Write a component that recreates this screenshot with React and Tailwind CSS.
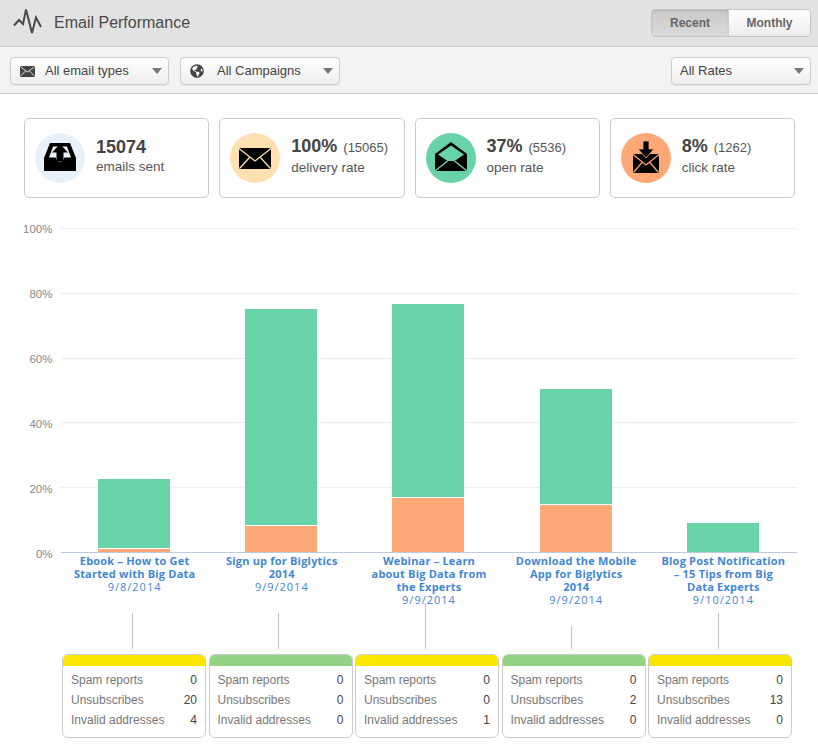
import React from 'react';
import { FaGlobeAmericas } from 'react-icons/fa';

const font = "font-['Liberation_Sans',Arial,sans-serif]";

// Icons
const PulseIcon = () => (
  <svg width="30" height="30" viewBox="0 0 30 30" fill="none" className="shrink-0">
    <polyline points="1,17.5 6,12 10,16 13,1.5 19,25 23,9.5 28,19" stroke="#4a4a4a" strokeWidth="2" />
  </svg>
);

const SmallMail = () => (
  <svg width="15" height="11" viewBox="0 0 15 11" className="shrink-0">
    <rect width="15" height="11" rx="1" fill="#444" />
    <path d="M0.5 0.8 L7.5 6 L14.5 0.8 M0.5 10.2 L5.5 5 M14.5 10.2 L9.5 5" stroke="#eee" strokeWidth="0.9" fill="none" />
  </svg>
);

const InboxIcon = () => (
  <svg width="50" height="50" viewBox="0 0 50 50">
    <path d="M15 10 H35 L41 25 V38 H9 V25 Z" fill="#000" />
    <path d="M18 13.5 L14 24.5 H20.5 L22.5 28.5 H27.5 L29.5 24.5 H36 L32 13.5 Z" fill="#e8f1fa" />
    <path d="M25 11 L33 19.5 H28.5 V28.5 H21.5 V19.5 H17 Z" fill="#000" />
  </svg>
);

const ClosedMailIcon = () => (
  <svg width="50" height="50" viewBox="0 0 50 50">
    <rect x="9" y="15" width="32" height="21" rx="1" fill="#000" />
    <path d="M9 15.5 L25 28 L41 15.5 M9.5 35.5 L20 24 M40.5 35.5 L30 24" stroke="#fee0b3" strokeWidth="1.3" fill="none" />
  </svg>
);

const OpenMailIcon = () => (
  <svg width="50" height="50" viewBox="0 0 50 50">
    <path d="M25 9 L41 21 V38 H9 V21 Z" fill="#000" />
    <path d="M25 12.5 L38 21.5 L28.5 28 H21.5 L12 21.5 Z" fill="#68d3a8" />
    <path d="M21.5 28 L9 38 M28.5 28 L41 38" stroke="#68d3a8" strokeWidth="1.4" fill="none" />
  </svg>
);

const DownloadMailIcon = () => (
  <svg width="50" height="50" viewBox="0 0 50 50">
    <rect x="12" y="21" width="26" height="19" rx="1" fill="#000" />
    <path d="M12 21.5 L25 32 L38 21.5 M12.5 39.5 L21 29.5 M37.5 39.5 L29 29.5" stroke="#fea878" strokeWidth="1.2" fill="none" />
    <path d="M22 8 H28 V16 H33 L25 25 L17 16 H22 Z" fill="#000" stroke="#fea878" strokeWidth="0.8" />
  </svg>
);

const Caret = () => (
  <svg width="10" height="6" viewBox="0 0 10 6" className="shrink-0">
    <path d="M0 0 H10 L5 6 Z" fill="#777" />
  </svg>
);

const Select = ({ width, pad, icon, iconWidth, label }) => (
  <div className={`${width} ${pad} h-[28px] flex items-center pr-[6px] bg-gradient-to-b from-white to-[#eeeeee] border border-[#cccccc] rounded-[4px] shadow-[0_1px_1px_rgba(0,0,0,0.05)]`}>
    {icon && <span className={`${iconWidth} flex items-center shrink-0`}>{icon}</span>}
    <span className="text-[13px] text-[#444] flex-1">{label}</span>
    <Caret />
  </div>
);

const stats = [
  { id: 1, icon: InboxIcon, circle: 'bg-[#e8f1fa]', value: '15074', count: '', label: 'emails sent' },
  { id: 2, icon: ClosedMailIcon, circle: 'bg-[#fee0b3]', value: '100%', count: '(15065)', label: 'delivery rate' },
  { id: 3, icon: OpenMailIcon, circle: 'bg-[#68d3a8]', value: '37%', count: '(5536)', label: 'open rate' },
  { id: 4, icon: DownloadMailIcon, circle: 'bg-[#fea878]', value: '8%', count: '(1262)', label: 'click rate' },
];

const axisLabels = ['100%', '80%', '60%', '40%', '20%', '0%'];

const campaigns = [
  {
    id: 1,
    bar: 'h-[73px]',
    orange: 'h-[3px]',
    lines: ['Ebook – How to Get', 'Started with Big Data'],
    date: '9/8/2014',
    connector: 'h-[36px]',
    status: 'bg-[#fae600]',
    rows: [0, 20, 4],
  },
  {
    id: 2,
    bar: 'h-[243px]',
    orange: 'h-[26px]',
    lines: ['Sign up for Biglytics', '2014'],
    date: '9/9/2014',
    connector: 'h-[36px]',
    status: 'bg-[#93d384]',
    rows: [0, 0, 0],
  },
  {
    id: 3,
    bar: 'h-[248px]',
    orange: 'h-[54px]',
    lines: ['Webinar – Learn', 'about Big Data from', 'the Experts'],
    date: '9/9/2014',
    connector: 'h-[46px]',
    status: 'bg-[#fae600]',
    rows: [0, 0, 1],
  },
  {
    id: 4,
    bar: 'h-[163px]',
    orange: 'h-[47px]',
    lines: ['Download the Mobile', 'App for Biglytics', '2014'],
    date: '9/9/2014',
    connector: 'h-[23px]',
    status: 'bg-[#93d384]',
    rows: [0, 2, 0],
  },
  {
    id: 5,
    bar: 'h-[29px]',
    orange: '',
    lines: ['Blog Post Notification', '– 15 Tips from Big', 'Data Experts'],
    date: '9/10/2014',
    connector: 'h-[36px]',
    status: 'bg-[#fae600]',
    rows: [0, 13, 0],
  },
];

const rowNames = ['Spam reports', 'Unsubscribes', 'Invalid addresses'];

export default function App() {
  return (
    <div className={`w-[818px] h-[756px] bg-white overflow-hidden ${font}`}>
      {/* Header */}
      <div className="h-[47px] bg-[#e2e2e2] border-b border-[#cccccc] flex items-center justify-between pl-[13px] pr-[7px]">
        <div className="flex items-center gap-[11px]">
          <PulseIcon />
          <span className="text-[16px] text-[#4a4a4a]">Email Performance</span>
        </div>
        <div className="flex h-[28px] text-[12px] font-bold text-[#666] rounded-[4px] border border-[#c4c4c4] overflow-hidden">
          <div className="w-[76px] flex items-center justify-center bg-gradient-to-b from-[#c9c9c9] to-[#dadada] shadow-[inset_0_1px_2px_rgba(0,0,0,0.12)]">Recent</div>
          <div className="w-[82px] flex items-center justify-center bg-gradient-to-b from-white to-[#ececec] border-l border-[#cccccc]">Monthly</div>
        </div>
      </div>

      {/* Filters */}
      <div className="h-[47px] bg-[#f3f3f3] border-b border-[#cccccc] flex items-center pt-[2px] pl-[10px] pr-[7px] gap-[11px]">
        <Select width="w-[159px]" pad="pl-[9px]" iconWidth="w-[25px]" icon={<SmallMail />} label="All email types" />
        <Select width="w-[160px]" pad="pl-[9px]" iconWidth="w-[27px]" icon={<FaGlobeAmericas className="text-[#444] text-[14px]" />} label="All Campaigns" />
        <div className="ml-auto">
          <Select width="w-[140px]" pad="pl-[8px]" label="All Rates" />
        </div>
      </div>

      {/* Stat cards */}
      <div className="flex gap-[10px] pl-[24px] pr-[23px] pt-[24px]">
        {stats.map((stat) => {
          const Icon = stat.icon;
          return (
            <div key={stat.id} className="flex-1 h-[80px] flex items-center gap-[11px] pl-[10px] bg-white border border-[#cccccc] rounded-[5px]">
              <div className={`w-[50px] h-[50px] rounded-full shrink-0 ${stat.circle}`}>
                <Icon />
              </div>
              <div className="mb-[4px]">
                <div className="flex items-baseline gap-[6px] text-[#444] leading-[22px]">
                  <span className="text-[18px] font-bold">{stat.value}</span>
                  {stat.count && <span className="text-[13px] text-[#555]">{stat.count}</span>}
                </div>
                <div className="text-[13.5px] text-[#555] leading-[18px]">{stat.label}</div>
              </div>
            </div>
          );
        })}
      </div>

      {/* Chart */}
      <div className="flex mt-[30px]">
        <div className="w-[52.5px] h-[325px] flex flex-col justify-between items-end text-[11.5px] text-[#888]">
          {axisLabels.map((label) => (
            <div key={label} className="h-0 flex items-center translate-y-[2px]">{label}</div>
          ))}
        </div>
        <div className="relative w-[736px] h-[325px] ml-[8px]">
          <div className="absolute inset-0 flex flex-col justify-between">
            {axisLabels.slice(0, 5).map((label) => (
              <div key={label} className="h-px bg-[#eeeeee]" />
            ))}
            <div className="h-px bg-[#bccbdb]" />
          </div>
          <div className="relative h-full pb-px grid grid-cols-5 items-end">
            {campaigns.map((c) => (
              <div key={c.id} className={`w-[72px] mx-auto flex flex-col ${c.bar}`}>
                <div className="flex-1 bg-[#68d3a8]" />
                {c.orange && <div className={`bg-[#fea878] border-t border-white box-content ${c.orange}`} />}
              </div>
            ))}
          </div>
        </div>
      </div>

      {/* Campaign names */}
      <div className="ml-[61px] w-[736px] h-[60px] pt-[1px] grid grid-cols-5 text-center text-[11px] leading-[13px] tracking-[0.2px] text-[#3f86d6] font-['Open_Sans',sans-serif]">
        {campaigns.map((c) => (
          <div key={c.id}>
            {c.lines.map((line) => (
              <div key={line} className="font-bold whitespace-nowrap">{line}</div>
            ))}
            <div className="tracking-[1px]">{c.date}</div>
          </div>
        ))}
      </div>

      {/* Connectors */}
      <div className="ml-[62px] w-[730px] h-[36px] grid grid-cols-5 grid-rows-[36px] gap-[2.5px] items-end">
        {campaigns.map((c) => (
          <div key={c.id} className={`w-px bg-[#c4c4c4] mx-auto -translate-x-[2px] ${c.connector}`} />
        ))}
      </div>

      {/* Deliverability tables */}
      <div className="ml-[62px] w-[730px] mt-[5px] grid grid-cols-5 gap-[2.5px]">
        {campaigns.map((c) => (
          <div key={c.id} className="h-[84px] border border-[#cccccc] rounded-[6px] overflow-hidden">
            <div className={`h-[12px] -mx-px -mt-px ${c.status}`} />
            <div className="pt-[4px] px-[8px] text-[12px] leading-[20px]">
              {rowNames.map((name, i) => (
                <div key={name} className="flex justify-between">
                  <span className="text-[#777]">{name}</span>
                  <span className="text-[#444]">{c.rows[i]}</span>
                </div>
              ))}
            </div>
          </div>
        ))}
      </div>
    </div>
  );
}
